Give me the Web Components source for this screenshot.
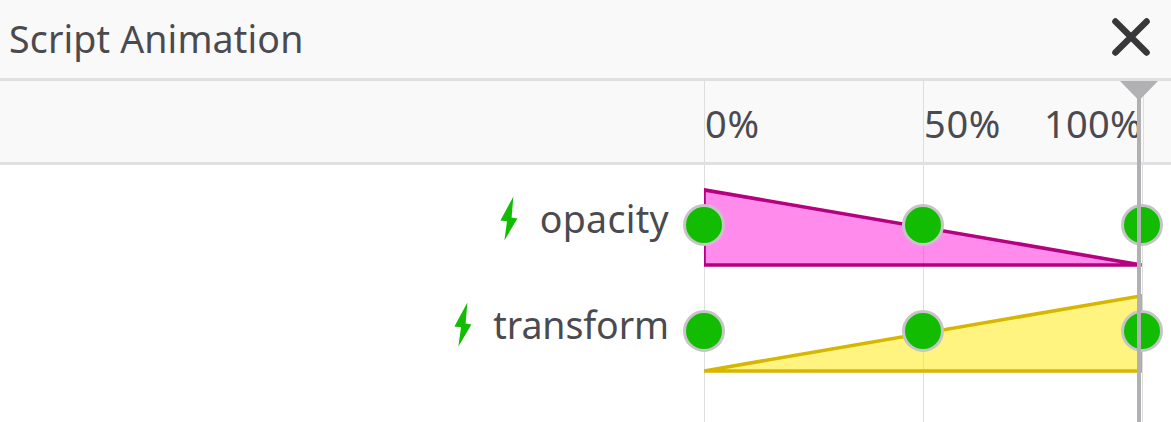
<!DOCTYPE html>
<html lang="en">
<head>
<meta charset="utf-8">
<title>Script Animation</title>
<style>
body { margin: 0; background: #fff; font-family: "Noto Sans", "Open Sans", sans-serif; color: #4a4a4f; overflow: hidden; }
</style>
</head>
<body>
<animation-detail></animation-detail>
<script>
const define = (name, html, init) => customElements.define(name, class extends HTMLElement {
  constructor() {
    super();
    this.attachShadow({ mode: "open" }).innerHTML = html;
  }
  connectedCallback() { if (init) init(this, this.shadowRoot); }
});

define("close-button", `
<style>:host{display:block;width:38px;height:38px} svg{display:block}</style>
<svg width="38" height="38" viewBox="0 0 38 38"><path d="M3.4 3.4 34.6 34.6M34.6 3.4 3.4 34.6" stroke="#38383a" stroke-width="6.4" stroke-linecap="round"/></svg>`);

define("detail-header", `
<style>
:host{display:flex;box-sizing:border-box;height:81px;padding:0 21px 0 9px;justify-content:space-between;background:#f9f9fa;border-bottom:3px solid #e0e0e2}
.title{font-size:37.5px;line-height:78px;letter-spacing:.15px;white-space:nowrap}
close-button{margin-top:18px}
</style>
<div class="title"><slot></slot></div><close-button></close-button>`);

define("progress-ticks", `
<style>
:host{display:grid;grid-template-columns:219px 219px 29px;box-sizing:border-box;height:84px;padding-left:704px;background:#f9f9fa;border-bottom:3px solid #e0e0e2;font-size:38px;line-height:85px;white-space:nowrap}
div{border-left:1px solid #dedee0;height:81px}
.mid{display:flex;justify-content:space-between}
.last{margin-left:1px}
span{letter-spacing:.7px}
.mid span:last-child{letter-spacing:.3px}
</style>
<div><span>0%</span></div><div class="mid"><span>50%</span><span>100%</span></div><div class="last"></div>`);

define("key-frame", `
<style>:host{display:block;box-sizing:border-box;width:42px;height:42px;border:3px solid #c5c5c7;border-radius:50%;background:#12bc00}</style>`);

define("property-row", `
<style>
:host{display:grid;grid-template-columns:704px 438px;height:106px}
.label{display:flex;justify-content:flex-end;box-sizing:border-box;padding-right:35px;font-size:37.5px;line-height:93px;white-space:nowrap}
.label svg{margin:24px 21.3px 0 0;width:18px;height:45px;flex:none}
.graph{position:relative}
.graph>svg{display:block}
.keys{position:absolute;left:-21px;top:32px;width:480px;display:flex;justify-content:space-between}
polygon{stroke-width:3.6}
</style>
<div class="label"><svg viewBox="0 0 18 45"><path d="M13.4.6 11.6 21.5 17.4 22.5 4.4 44.4 7 25.2.4 24.4Z" fill="#12bc00"/></svg><span><slot></slot></span></div>
<div class="graph"><svg width="438" height="106"><polygon/></svg>
<div class="keys"><key-frame></key-frame><key-frame></key-frame><key-frame></key-frame></div></div>`,
(host, root) => {
  const p = root.querySelector("polygon");
  const fall = host.getAttribute("trend") === "fall";
  p.setAttribute("points", fall ? "0,17.8 437.5,93 0,93" : "0,93 437.5,17.8 437.5,93");
  p.setAttribute("fill", fall ? "#ff1ad9" : "#ffe900");
  p.setAttribute("fill-opacity", ".5");
  p.setAttribute("stroke", fall ? "#b5007f" : "#d7b600");
  root.querySelector("span").style.letterSpacing = host.getAttribute("spacing");
});

define("property-list", `
<style>
:host{display:block;box-sizing:border-box;height:257px;padding-top:7px;
background:linear-gradient(#dedee0,#dedee0) 704px 0/1px 100% no-repeat,linear-gradient(#dedee0,#dedee0) 923px 0/1px 100% no-repeat,linear-gradient(#dedee0,#dedee0) 1142px 0/1px 100% no-repeat,#fff}
</style><slot></slot>`);

define("progress-scrubber", `
<style>:host{position:absolute;left:1120px;top:81px;width:38px;height:341px} svg{display:block}</style>
<svg width="38" height="341"><path d="M0 0H38L21 17.5V341H17V17.5Z" fill="#b1b1b3"/></svg>`);

define("animation-detail", `
<style>:host{display:block;position:relative;width:1171px;height:422px;overflow:hidden}</style>
<detail-header>Script Animation</detail-header>
<progress-ticks></progress-ticks>
<property-list>
<property-row trend="fall" spacing=".3px">opacity</property-row>
<property-row trend="rise" spacing="-.1px">transform</property-row>
</property-list>
<progress-scrubber></progress-scrubber>`);
</script>
</body>
</html>
